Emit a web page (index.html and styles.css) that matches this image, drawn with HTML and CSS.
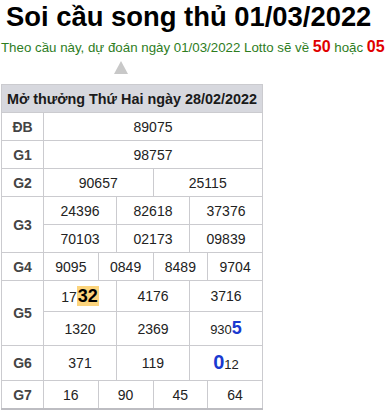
FILE: index.html
```html
<!DOCTYPE html>
<html lang="vi">
<head>
<meta charset="utf-8">
<title>Soi cầu song thủ 01/03/2022</title>
<link rel="stylesheet" href="styles.css">
</head>
<body>
<h1 class="title">Soi cầu song thủ 01/03/2022</h1>
<p class="predict">Theo cầu này, dự đoán ngày 01/03/2022 Lotto sẽ về <b class="red">50</b> hoặc <b class="red">05</b></p>
<div class="arrow"></div>
<table class="kq">
  <colgroup>
    <col class="c-label">
    <col><col><col><col><col><col><col><col><col><col><col><col>
  </colgroup>
  <thead>
    <tr><th colspan="13" class="head">Mở thưởng Thứ Hai ngày 28/02/2022</th></tr>
  </thead>
  <tbody>
    <tr><td class="lbl">ĐB</td><td colspan="12">89075</td></tr>
    <tr><td class="lbl">G1</td><td colspan="12">98757</td></tr>
    <tr><td class="lbl">G2</td><td colspan="6">90657</td><td colspan="6">25115</td></tr>
    <tr><td class="lbl" rowspan="2">G3</td><td colspan="4">24396</td><td colspan="4">82618</td><td colspan="4">37376</td></tr>
    <tr><td colspan="4">70103</td><td colspan="4">02173</td><td colspan="4">09839</td></tr>
    <tr><td class="lbl">G4</td><td colspan="3">9095</td><td colspan="3">0849</td><td colspan="3">8489</td><td colspan="3">9704</td></tr>
    <tr class="r-g5a"><td class="lbl" rowspan="2">G5</td><td colspan="4">17<span class="hl">32</span></td><td colspan="4">4176</td><td colspan="4">3716</td></tr>
    <tr class="r-g5b"><td colspan="4">1320</td><td colspan="4">2369</td><td colspan="4"><span class="sm">930</span><b class="blue b5">5</b></td></tr>
    <tr class="r-g6"><td class="lbl">G6</td><td colspan="4">371</td><td colspan="4">119</td><td colspan="4"><b class="blue b0">0</b><span class="sm">12</span></td></tr>
    <tr class="last"><td class="lbl">G7</td><td colspan="3">16</td><td colspan="3">90</td><td colspan="3">45</td><td colspan="3">64</td></tr>
  </tbody>
</table>
</body>
</html>
```
FILE: styles.css
```css
html, body {
  margin: 0;
  padding: 0;
  background: #fff;
}
body {
  font-family: "Liberation Sans", Arial, sans-serif;
  color: #222;
  padding-left: 1px;
}
.title {
  margin: 1px 0 0 5px;
  font-size: 27.4px;
  line-height: 32px;
  font-weight: bold;
  color: #000;
}
.predict {
  margin: 5px 0 0 0;
  font-size: 13.3px;
  line-height: 18px;
  color: #2e7d1e;
}
.red {
  color: #e00000;
  font-size: 16px;
}
.arrow {
  width: 0;
  height: 0;
  margin: 4px 0 0 113px;
  border-left: 7.5px solid transparent;
  border-right: 7.5px solid transparent;
  border-bottom: 13px solid #c8c8c8;
}
.kq {
  margin-top: 10px;
  width: 262px;
  table-layout: fixed;
  border-collapse: collapse;
  font-size: 14px;
  color: #222;
}
.c-label {
  width: 42px;
}
.kq th, .kq td {
  border: 1px solid #cbcbcf;
  text-align: center;
  padding: 0;
  height: 27px;
  line-height: 16px;
  white-space: nowrap;
}
.kq .head {
  background: #d7d8de;
  color: #1a1a1a;
  font-weight: bold;
  font-size: 14.4px;
  height: 27px;
}
.kq .lbl {
  font-weight: bold;
  color: #444;
}
.hl {
  background: #fcd47c;
  color: #000;
  font-weight: bold;
  font-size: 18px;
  padding: 0 1px;
}
.sm {
  font-size: 13px;
}
.blue {
  color: #1a3ad0;
  font-weight: bold;
}
.b5 {
  font-size: 18px;
}
.b0 {
  font-size: 20px;
}
.r-g5a td { height: 30px; }
.r-g5b td { height: 33px; }
.r-g6 td { height: 34px; }
.last td {
  border-bottom: 2px solid #bdbdc2;
}
```
